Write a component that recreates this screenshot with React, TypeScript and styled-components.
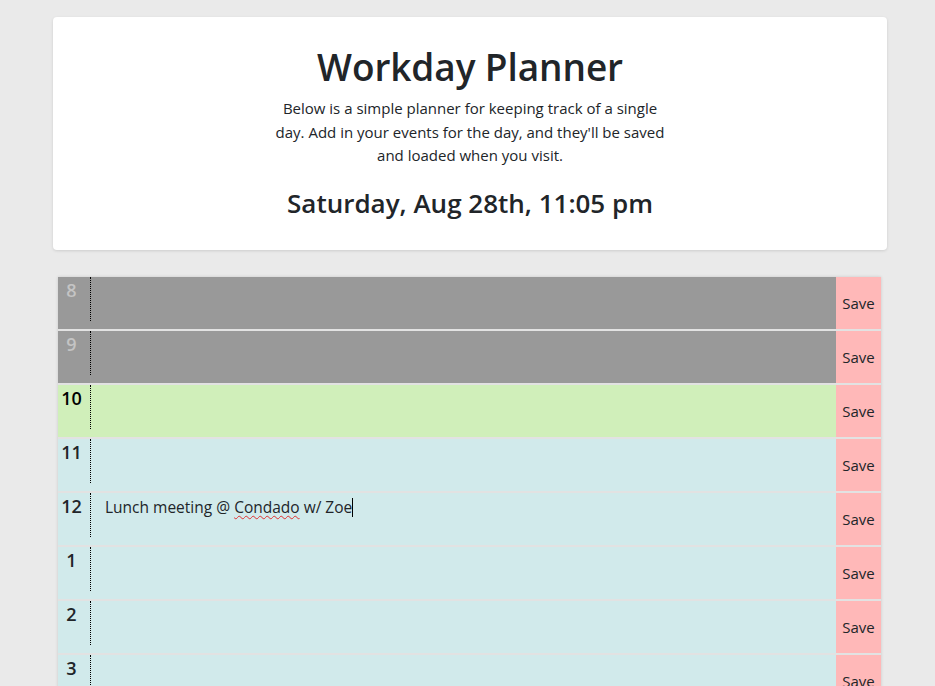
import React from "react";
import styled, { createGlobalStyle } from "styled-components";

const Global = createGlobalStyle`
  html, body { margin: 0; padding: 0; }
  body {
    background: #eaeaea;
    font-family: "Open Sans", "Noto Sans", sans-serif;
    color: #212529;
    overflow: hidden;
  }
`;

const Page = styled.div`
  padding: 17px 48px 0 53px;
`;

const HeaderCard = styled.header`
  background: #fff;
  border-radius: 4px;
  box-shadow: 0 1px 3px rgba(0, 0, 0, 0.12);
  height: 233px;
  box-sizing: border-box;
  padding-top: 24px;
  display: flex;
  flex-direction: column;
  align-items: center;
  text-align: center;
`;

const Title = styled.h1`
  margin: 0;
  font-size: 37px;
  font-weight: 600;
  line-height: 52px;
  letter-spacing: -0.1px;
`;

const Lead = styled.p`
  margin: 4px 0 0;
  max-width: 400px;
  font-size: 15px;
  line-height: 23.5px;
`;

const DateLine = styled.h2`
  margin: 17px 0 0;
  font-size: 26px;
  font-weight: 600;
  line-height: 36px;
`;

const Planner = styled.section`
  margin: 27px 6px 0 5px;
  display: flex;
  flex-direction: column;
  gap: 2px;
  background: #e2e2e2;
  box-shadow: 0 0 3px rgba(0, 0, 0, 0.15);
`;

type Tense = "past" | "present" | "future";

const tenseBg: Record<Tense, string> = {
  past: "#999999",
  present: "#d0efba",
  future: "#d1eaeb",
};

const tenseFg: Record<Tense, string> = {
  past: "#c4c4c4",
  present: "#000000",
  future: "#212529",
};

const Row = styled.div<{ $tense: Tense }>`
  display: flex;
  height: 52px;
  background: ${(p) => tenseBg[p.$tense]};
`;

const Hour = styled.div<{ $tense: Tense }>`
  width: 33px;
  height: 44px;
  box-sizing: border-box;
  border-right: 1px dotted #000;
  text-align: center;
  font-size: 18px;
  font-weight: 600;
  line-height: 24px;
  padding-top: 1px;
  padding-right: 5px;
  color: ${(p) => tenseFg[p.$tense]};
`;

const Entry = styled.div`
  flex: 1;
  padding: 2px 14px;
  font-size: 15.5px;
  line-height: 24px;
  color: #212529;
`;

const Misspelled = styled.span`
  text-decoration: underline wavy #e0302f;
  text-decoration-thickness: 1px;
  text-underline-offset: 2px;
`;

const Caret = styled.span`
  display: inline-block;
  width: 1px;
  height: 19px;
  background: #000;
  vertical-align: -4px;
`;

const SaveButton = styled.button`
  width: 45px;
  border: none;
  padding: 0;
  margin: 0;
  background: #ffb8b8;
  color: #212529;
  font-family: inherit;
  font-size: 15px;
  cursor: pointer;
`;

const hours: { label: string; tense: Tense; text?: React.ReactNode }[] = [
  { label: "8", tense: "past" },
  { label: "9", tense: "past" },
  { label: "10", tense: "present" },
  { label: "11", tense: "future" },
  {
    label: "12",
    tense: "future",
    text: (
      <>
        Lunch meeting @ <Misspelled>Condado</Misspelled> w/ Zoe
        <Caret />
      </>
    ),
  },
  { label: "1", tense: "future" },
  { label: "2", tense: "future" },
  { label: "3", tense: "future" },
  { label: "4", tense: "future" },
  { label: "5", tense: "future" },
];

export default function App() {
  return (
    <Page>
      <Global />
      <HeaderCard>
        <Title>Workday Planner</Title>
        <Lead>
          Below is a simple planner for keeping track of a single day. Add in
          your events for the day, and they'll be saved and loaded when you
          visit.
        </Lead>
        <DateLine>Saturday, Aug 28th, 11:05 pm</DateLine>
      </HeaderCard>
      <Planner>
        {hours.map((h) => (
          <Row key={h.label} $tense={h.tense}>
            <Hour $tense={h.tense}>{h.label}</Hour>
            <Entry>{h.text}</Entry>
            <SaveButton>Save</SaveButton>
          </Row>
        ))}
      </Planner>
    </Page>
  );
}
